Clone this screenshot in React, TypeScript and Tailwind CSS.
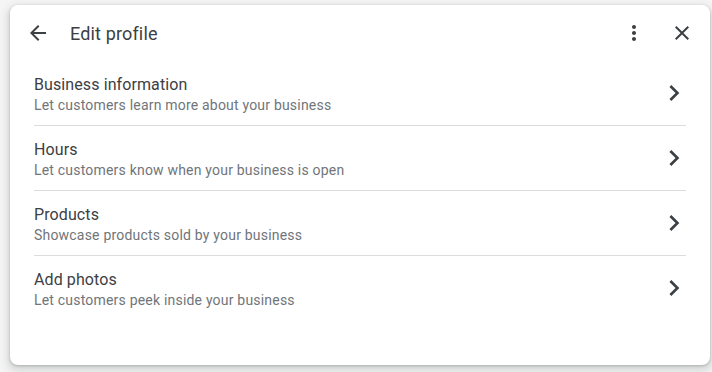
import React from "react";

const sections = [
  { title: "Business information", text: "Let customers learn more about your business" },
  { title: "Hours", text: "Let customers know when your business is open" },
  { title: "Products", text: "Showcase products sold by your business" },
  { title: "Add photos", text: "Let customers peek inside your business" },
];

function Icon({ d, className, size = 24 }: { d: string; className?: string; size?: number }) {
  return (
    <svg viewBox="0 0 24 24" width={size} height={size} className={className} fill="currentColor">
      <path d={d} />
    </svg>
  );
}

const arrowBack = "M20 11H7.83l5.59-5.59L12 4l-8 8 8 8 1.41-1.41L7.83 13H20v-2z";
const moreVert =
  "M12 8c1.1 0 2-.9 2-2s-.9-2-2-2-2 .9-2 2 .9 2 2 2zm0 2c-1.1 0-2 .9-2 2s.9 2 2 2 2-.9 2-2-.9-2-2-2zm0 6c-1.1 0-2 .9-2 2s.9 2 2 2 2-.9 2-2-.9-2-2-2z";
const close =
  "M19 6.41L17.59 5 12 10.59 6.41 5 5 6.41 10.59 12 5 17.59 6.41 19 12 13.41 17.59 19 19 17.59 13.41 12z";
const chevronRight = "M10 6L8.59 7.41 13.17 12l-4.58 4.59L10 18l6-6z";

export default function App() {
  return (
    <div className="h-[372px] w-[712px] overflow-hidden bg-[#f5f5f5] pl-[10px] pt-[5px] font-[Roboto,Arial,sans-serif]">
      <div className="flex h-[360px] w-[700px] flex-col rounded-lg bg-white shadow-[0_1px_3px_rgba(60,64,67,0.3),0_4px_8px_3px_rgba(60,64,67,0.15)]">
        <div className="flex h-14 items-center px-4">
          <button className="text-[#3c4043]">
            <Icon d={arrowBack} />
          </button>
          <h1 className="ml-5 flex-1 text-[18px] tracking-[0.15px] text-[#3c4043]">Edit profile</h1>
          <button className="text-[#3c4043]">
            <Icon d={moreVert} />
          </button>
          <button className="ml-6 text-[#3c4043]">
            <Icon d={close} />
          </button>
        </div>

        <div className="px-6">
          {sections.map((section, i) => (
            <div
              key={section.title}
              className={
                "flex items-center justify-between pb-[10px] pt-[14px] " +
                (i < sections.length - 1 ? "border-b border-[#dadce0]" : "")
              }
            >
              <div>
                <div className="text-[16px] leading-5 tracking-[0.1px] text-[#3c4043]">{section.title}</div>
                <div className="text-[14px] leading-5 tracking-[0.2px] text-[#70757a]">{section.text}</div>
              </div>
              <Icon d={chevronRight} size={32} className="-mr-1 -mt-1 text-[#3c4043]" />
            </div>
          ))}
        </div>
      </div>
    </div>
  );
}
